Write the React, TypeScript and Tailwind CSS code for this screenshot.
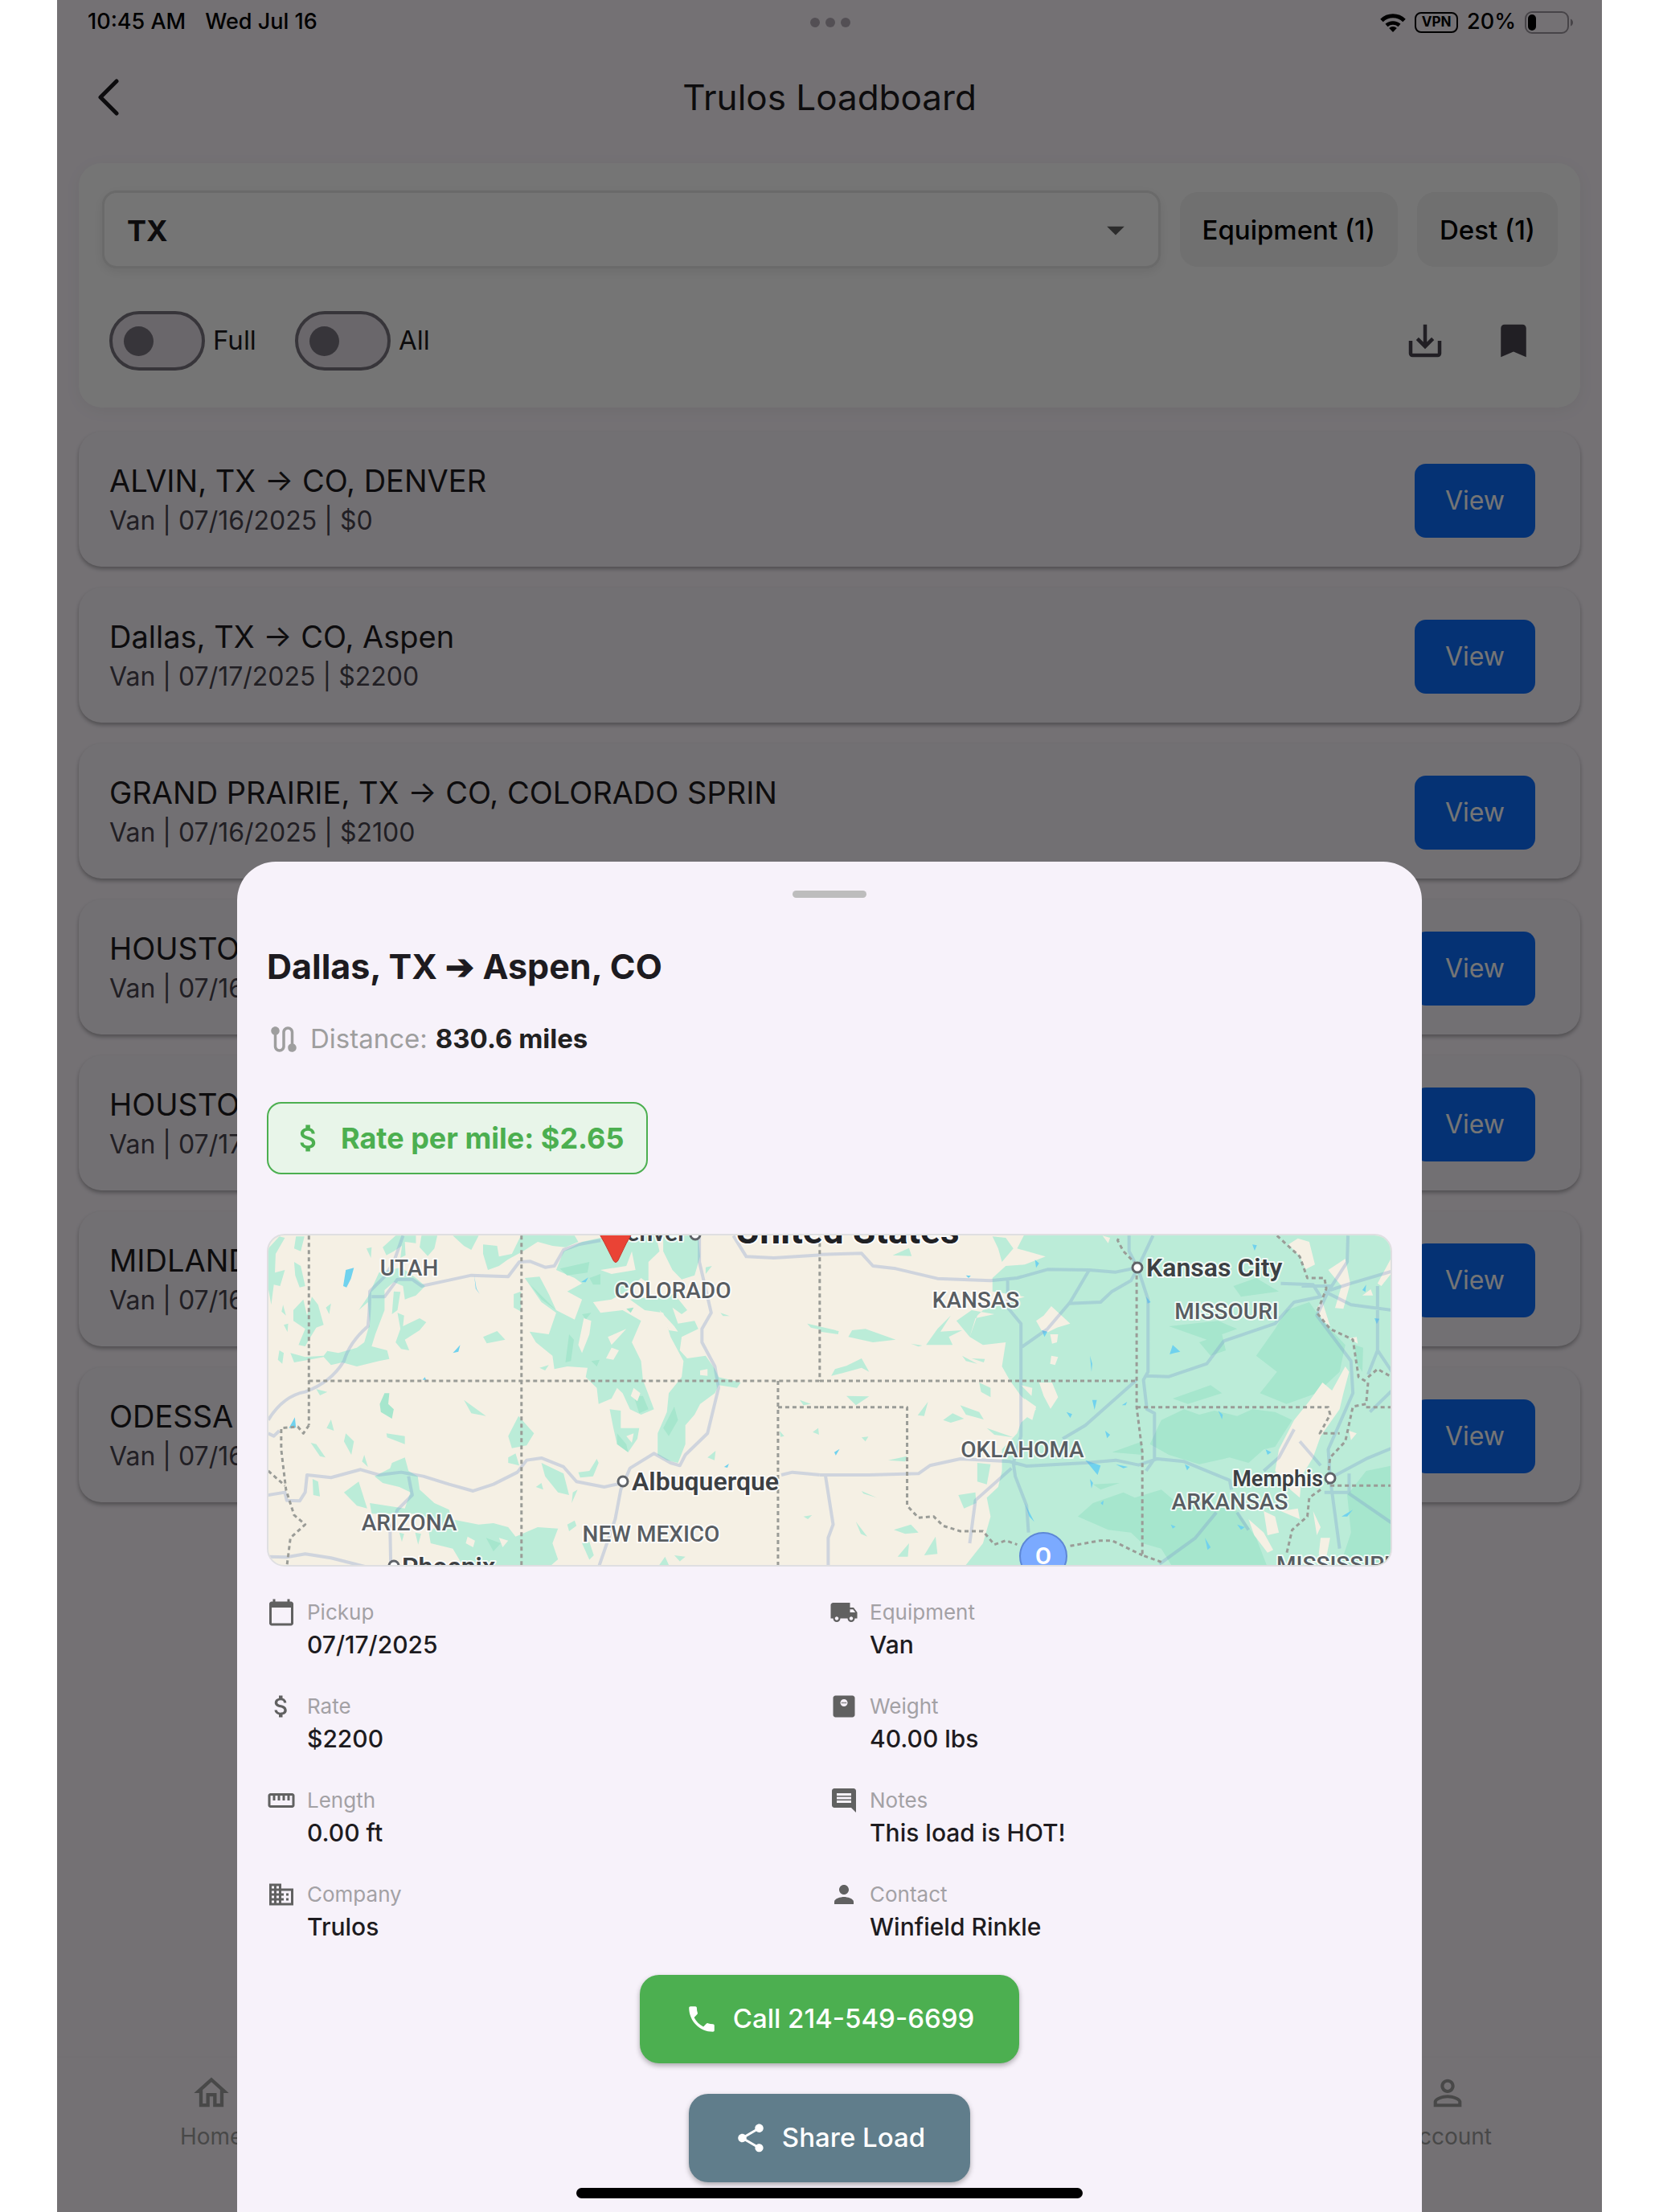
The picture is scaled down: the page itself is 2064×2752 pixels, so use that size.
import React from 'react';
import {
    MdArrowDropDown,
    MdAttachMoney,
    MdBookmark,
    MdBusiness,
    MdCalendarToday,
    MdComment,
    MdLocalShipping,
    MdMonitorWeight,
    MdOutlineHome,
    MdPerson,
    MdPersonOutline,
    MdPhone,
    MdRoute,
    MdSaveAlt,
    MdShare,
    MdStraighten,
} from 'react-icons/md';
import type { IconType } from 'react-icons';

interface Load {
    route: string;
    info: string;
}

interface Detail {
    icon: IconType;
    label: string;
    value: string;
}

const loads: Load[] = [
    { route: 'ALVIN, TX → CO, DENVER', info: 'Van | 07/16/2025 | $0' },
    { route: 'Dallas, TX → CO, Aspen', info: 'Van | 07/17/2025 | $2200' },
    { route: 'GRAND PRAIRIE, TX → CO, COLORADO SPRIN', info: 'Van | 07/16/2025 | $2100' },
    { route: 'HOUSTO', info: 'Van | 07/16' },
    { route: 'HOUSTO', info: 'Van | 07/17' },
    { route: 'MIDLAND', info: 'Van | 07/16' },
    { route: 'ODESSA', info: 'Van | 07/16' },
];

const details: Detail[] = [
    { icon: MdCalendarToday, label: 'Pickup', value: '07/17/2025' },
    { icon: MdLocalShipping, label: 'Equipment', value: 'Van' },
    { icon: MdAttachMoney, label: 'Rate', value: '$2200' },
    { icon: MdMonitorWeight, label: 'Weight', value: '40.00 lbs' },
    { icon: MdStraighten, label: 'Length', value: '0.00 ft' },
    { icon: MdComment, label: 'Notes', value: 'This load is HOT!' },
    { icon: MdBusiness, label: 'Company', value: 'Trulos' },
    { icon: MdPerson, label: 'Contact', value: 'Winfield Rinkle' },
];

const StatusBar: React.FC = () => (
    <div className="grid h-[55px] grid-cols-3 items-center pl-[38px] pr-9 text-[27px] font-medium text-black">
        <div className="flex gap-6">
            <span>10:45 AM</span>
            <span>Wed Jul 16</span>
        </div>
        <div className="flex justify-center gap-[7px]">
            <span className="size-3 rounded-full bg-[#b5adb7]" />
            <span className="size-3 rounded-full bg-[#b5adb7]" />
            <span className="size-3 rounded-full bg-[#b5adb7]" />
        </div>
        <div className="flex items-center justify-end gap-[11px]">
            <svg width="32" height="24" viewBox="0 0 32 24" fill="none" stroke="currentColor" strokeWidth="5">
                <path d="M2 9.5a20 20 0 0 1 28 0" />
                <path d="M8 15.5a12 12 0 0 1 16 0" strokeWidth="4.5" />
                <path d="M16 24l-4.8-5a7 7 0 0 1 9.6 0z" fill="currentColor" stroke="none" />
            </svg>
            <span className="flex h-[26px] w-[54px] items-center justify-center rounded-lg border-2 border-black text-[17px] font-bold">
                VPN
            </span>
            <span>20%</span>
            <svg width="60" height="28" viewBox="0 0 60 28">
                <rect x="1" y="1" width="53" height="26" rx="8" fill="none" stroke="#9b959d" strokeWidth="2" />
                <rect x="4" y="4" width="10" height="20" rx="5" />
                <path d="M57 9.500q3 1.500 3 4.500t-3 4.500z" fill="#9b959d" />
            </svg>
        </div>
    </div>
);

const Header: React.FC = () => (
    <header className="grid h-[132px] grid-cols-[1fr_auto_1fr] items-center px-[50px]">
        <button type="button" aria-label="Back" className="w-fit text-[#1d1b20]">
            <svg width="28" height="46" viewBox="0 0 28 46" fill="none" stroke="currentColor" strokeWidth="5" strokeLinecap="round" strokeLinejoin="round">
                <path d="M24 3L4 23l20 20" />
            </svg>
        </button>
        <h1 className="text-[44px] leading-[56px] text-[#1d1b20]">Trulos Loadboard</h1>
    </header>
);

const Toggle: React.FC<{ label: string }> = ({ label }) => (
    <label className="flex items-center gap-[10px] text-[33px] text-[#1d1b20]">
        <input
            type="checkbox"
            className="flex h-[74px] w-[119px] appearance-none items-center rounded-full border-4 border-[#79747e] bg-[#e6e0e9] pl-[14px] before:size-[37px] before:rounded-full before:bg-[#79747e] before:content-['']"
        />
        {label}
    </label>
);

const Filters: React.FC = () => (
    <section className="mx-[27px] mt-4 rounded-[28px] bg-white pt-[34px] pr-7 pb-[46px] pl-[29px] shadow-[0_4px_20px_rgba(0,0,0,0.05)]">
        <div className="flex items-center gap-6">
            <div className="relative flex-1">
                <select
                    aria-label="State"
                    className="h-[97px] w-full appearance-none rounded-[18px] border-[3px] border-[#e6e6e6] bg-white px-7 pt-[2px] text-4xl font-bold text-[#1d1b20] shadow-[0_4px_14px_rgba(0,0,0,0.08)]"
                >
                    <option>TX</option>
                </select>
                <MdArrowDropDown className="pointer-events-none absolute top-[23px] right-[30px] size-[52px] text-[#616161]" />
            </div>
            <button type="button" className="h-[93px] rounded-[22px] bg-[#f3f3f3] px-7 pt-[2px] text-[33px] font-medium text-black">
                Equipment (1)
            </button>
            <button type="button" className="h-[93px] rounded-[22px] bg-[#f3f3f3] px-7 pt-[2px] text-[33px] font-medium text-black">
                Dest (1)
            </button>
        </div>
        <div className="mt-[53px] flex h-[74px] items-center justify-between pr-7 pl-[9px]">
            <div className="flex gap-12">
                <Toggle label="Full" />
                <Toggle label="All" />
            </div>
            <div className="flex gap-14 text-[#49454f]">
                <button type="button" aria-label="Save search">
                    <MdSaveAlt className="size-[54px]" />
                </button>
                <button type="button" aria-label="Bookmarks">
                    <MdBookmark className="size-[54px]" />
                </button>
            </div>
        </div>
    </section>
);

const LoadCard: React.FC<{ load: Load }> = ({ load }) => (
    <li className="flex h-[168px] items-center justify-between rounded-[28px] bg-[#f8f3fa] pt-[3px] pr-14 pl-[38px] shadow-[0_3px_5px_rgba(0,0,0,0.3)]">
        <div>
            <h2 className="text-[38px] leading-[50px] text-[#1d1b20]">{load.route}</h2>
            <p className="text-[32px] leading-[50px] text-[#49454f]">{load.info}</p>
        </div>
        <button type="button" className="h-[92px] w-[150px] rounded-[14px] bg-[#0d6efd] text-[32px] text-white">
            View
        </button>
    </li>
);

const BottomNav: React.FC = () => (
    <nav className="grid h-[194px] grid-cols-5 border-t-2 border-[#faf3fb] text-[#9e9e9e]">
        <a href="#home" className="flex flex-col items-center gap-[10px] pt-[18px] text-[28px] leading-9">
            <MdOutlineHome className="size-[52px]" />
            Home
        </a>
        <a href="#account" className="col-start-5 flex flex-col items-center gap-[10px] pt-[18px] text-[28px] leading-9">
            <MdPersonOutline className="size-[52px]" />
            Account
        </a>
    </nav>
);

// Western half of the map
const westLand = [
    'M330 190L390 170L430 210L455 240L430 275L400 290L395 240L370 225L345 255L345 330L320 420L310 465L352 480L358 512L330 520L270 540L230 525L200 535L180 505L140 515L100 525L90 490L130 505L180 500L190 482L220 490L270 470L290 450L305 380L300 300L275 330L300 280Z',
    'M370 260L388 262L380 330L365 345Z',
    'M380 340L398 350L395 390L440 360L458 375L440 405L400 440L412 480L390 475L375 450L388 400Z',
    'M612 430L650 408L672 440L622 454Z',
    'M30 100L60 55L75 60L50 120L48 190L75 180L62 240L45 235L38 310L30 250Z',
    'M105 55L128 55L118 110L100 100Z M100 150L118 165L130 240L115 245L103 200Z',
    'M98 330L125 290L135 350L148 280L165 310L180 385L160 395L140 440L130 465L112 460L130 400L98 370Z',
    'M186 320L200 305L195 345Z M296 100L310 95L308 135Z M70 310L78 350L66 335Z M60 480L72 490L68 530L56 515Z M72 385L84 380L82 412Z',
    'M340 95L375 52L430 52L430 80L400 75L402 125L388 135L392 90L370 110L350 125Z',
    'M445 52L488 52L480 100L462 128L440 95Z M530 52L600 52L580 105L560 90Z',
    'M612 85L650 90L655 130L690 120L715 50L860 52L870 75L835 95L800 90L760 75L720 110L680 140L655 165L625 180L612 120Z',
    'M725 210L765 205L790 270L810 330L860 365L880 290L840 260L880 230L860 210L810 180L830 110L880 75L930 60L1080 52L1090 110L1060 150L1060 230L1040 210L1000 260L960 290L910 300L930 340L990 330L1040 370L1015 450L1040 520L1045 590L1075 700L1040 720L1010 700L990 640L975 620L960 660L925 680L920 620L890 580L895 545L840 540L805 550L800 500L755 450L738 410L790 420L810 340L770 300Z',
    'M1100 52L1195 52L1200 130L1185 200L1150 215L1125 180L1100 110Z M1215 170L1232 165L1215 195Z',
    'M1010 290L1130 270L1165 330L1150 345L1125 320L1140 380L1185 370L1195 400L1150 430L1145 480L1165 510L1215 500L1240 550L1250 580L1310 600L1300 620L1250 610L1240 640L1200 680L1185 720L1160 760L1160 830L1140 900L1110 890L1085 870L1085 790L1110 710L1115 640L1150 580L1155 520L1120 430L1100 340L1050 330Z',
    'M955 700L985 705L985 770L1035 770L1030 810L1005 860L975 830L965 770Z',
    'M708 725L750 790L730 835L690 845L680 800Z M680 880L700 865L710 910L680 900Z M695 270L715 260L715 335L695 320Z M765 545L790 535L780 555Z',
    'M350 790L400 800L400 830L352 805Z M240 790L262 820L255 870L235 820Z M188 770L200 738L208 780Z M145 825L160 830L185 880L170 875Z M290 870L300 915L284 895Z M150 960L165 970L170 1025L152 1020Z M235 1010L275 970L298 1070L270 1060Z M160 625L190 635L170 648Z',
    'M318 950L360 920L365 900L400 880L410 930L435 950L440 1000L480 1050L520 1075L525 1110L600 1130L640 1125L680 1140L700 1175L760 1140L815 1145L800 1200L815 1260L790 1290L560 1290L530 1220L470 1200L465 1160L490 1130L440 1090L310 1090L305 1050L400 1070L415 1010L385 990L340 975Z',
    'M770 900L830 940L845 1020L815 1010L780 950Z M870 935L900 930L920 885L925 900L910 950L875 955Z M840 1130L860 1115L865 1135L845 1155Z M880 1200L900 1195L912 1245L900 1262Z M1130 1245L1160 1250L1145 1268Z M1085 1290L1105 1250L1118 1290Z M1220 880L1242 855L1239 890Z M560 665L590 695L620 725L580 715Z M855 1010L868 1000L852 1050Z M755 990L770 975L775 1000Z',
    'M1490 380L1568 405L1568 417L1500 395Z M1470 665L1500 680L1480 685Z M1505 785L1520 770L1522 795Z M1480 1100L1503 1095L1492 1110Z M1255 340L1280 352L1262 352Z M1415 780L1428 800L1418 803Z M385 1160L398 1165L392 1195Z M428 1160L444 1165L436 1205Z',
];

const westForest = [
    'M345 640L358 640L355 680L370 700L365 735L335 710L332 680Z',
    'M900 210L930 195L930 235L910 235Z M880 345L905 340L890 365Z M1000 325L1020 320L1012 340Z M905 520L928 515L920 540Z',
    'M740 235L810 330L770 290Z M820 175L900 150L895 190L840 200Z M1100 770L1130 690L1140 740L1115 800Z M1020 650L1045 650L1060 700L1035 715Z M975 790L1000 830L1005 860L975 830Z M620 1180L660 1200L640 1230Z',
    'M845 420L858 440L850 520L835 525Z',
];

const westClearings = [
    'M885 360L905 370L900 420L880 490L870 460Z M930 180L1000 165L1015 110L1025 180L960 195Z M960 470L980 480L965 515L945 510Z M950 430L1000 400L960 460Z M1090 330L1130 390L1140 410L1115 405Z',
    'M1200 555L1220 550L1220 575L1200 572Z M1020 620L1038 640L1030 670L1012 650Z M1000 800L1020 790L1015 825Z M570 1175L590 1190L585 1215L565 1200Z M655 1180L680 1190L665 1215Z',
];

const westRoads = [
    'M30 740Q70 650 130 635Q200 600 235 520Q250 450 300 390Q305 330 305 260L345 205L370 150L395 52',
    'M310 280L345 280L380 215L420 215L445 240L520 218L580 200L680 205L710 150L740 148L780 170L805 165L830 105L870 85L930 70',
    'M1198 52L1198 150L1230 340L1205 400L1205 450L1240 540L1250 620L1220 790L1160 870L1145 910L1120 900L1075 865L1010 920L985 1000L970 1110L925 1290',
    'M30 1020L75 1010L80 1040L115 1042L130 1010L135 945L200 955L280 925L330 945L390 935L450 950L520 980L585 1005L640 980L705 935L730 890L770 882L830 915L865 970L940 990L990 975',
    'M410 950L420 1020L380 1075L360 1150L362 1290',
    'M30 1250L80 1252L130 1240L200 1255L300 1290',
    'M1290 52L1325 130L1400 135L1524 124',
    'M1420 945L1450 935L1524 945M30 790L45 800L60 780',
];

const westBorders = [
    'M140 52V760', 'M716 52V1290', 'M140 594H1524', 'M1524 52V594', 'M1411 594V1290', 'M1411 692H1524',
    'M140 760L125 790L110 765L65 770L65 850L78 1000L100 1095L130 1130L90 1180L80 1290', 'M30 930L75 985',
];

const westWater = [
    'M240 180L262 172L254 212L242 245L233 240Z M530 490L550 460L545 485Z M588 200L594 250L603 270L592 250Z M86 770L102 730L105 768Z M878 225L897 208L890 226Z M1265 915L1278 903L1274 918Z M448 590L454 580L458 590Z',
];

// Eastern half of the map
const eastLand = [
    'M540 45L520 100L595 130L540 160L490 165L455 210L455 260L540 280L430 330L415 350L395 430L430 460L490 450L480 540L500 590L530 650L570 700L530 750L520 790L480 850L480 930L470 990L440 1030L450 1100L430 1200L380 1290H1520V45Z',
    'M455 55L490 60L510 100L480 150L470 100Z M360 370L400 330L460 345L410 360L395 430Z',
    'M75 430L85 405L120 400L200 440L140 450Z M280 460L310 400L345 350L318 410L375 405L340 430L350 460Z M30 575L40 550L70 538L110 510L130 560L110 545L60 565Z M240 455L270 462L260 466Z',
    'M375 500L415 530L385 520Z M400 510L435 512L432 525Z M70 650L130 652L95 685Z M420 600L450 620L450 655L425 635Z M370 685L420 710L432 738L385 720Z M258 722L285 672L275 725Z M440 770L510 805L460 795Z M325 740L350 715L380 735L345 750Z',
    'M180 890L230 875L225 895Z M195 1150L240 1130L260 1160L225 1165Z M205 1250L235 1200L232 1250Z M95 1120L125 1175L108 1165Z M110 1005L150 1030L115 1015Z M365 1020L410 1010L412 1050L380 1070Z M275 1245L305 1175L310 1240Z M192 125L235 98L242 128Z M0 395L50 408L48 420L0 410Z M110 805L128 802L120 820Z M415 900L450 905L440 980L415 970Z',
];

const eastForest = [
    'M1150 500L1200 400L1230 330L1290 300L1325 370L1385 460L1370 560L1310 640L1230 680L1160 640L1205 560Z',
    'M870 830L900 740L960 700L1000 720L1040 705L1100 725L1140 700L1200 710L1245 740L1200 840L1170 850L1130 900L1080 880L1000 905L920 870Z',
    'M680 1100L720 1050L800 1010L830 1030L900 1000L950 1060L1010 1050L1100 1080L1150 1180L1180 1290H930L900 1220L850 1200L820 1160L760 1150Z',
    'M930 660L1030 610L1060 640L970 680Z M920 390L1050 370L1100 400L1020 440Z M1090 240L1150 210L1210 260L1110 280Z M1000 450L1060 420L1070 480L1030 500Z',
    'M1390 1020L1440 930L1510 910V1290H1370L1400 1160Z',
    'M1410 460L1432 470L1430 560L1415 530Z M720 980L790 975L740 1000Z M770 860L850 820L850 870Z',
];

const eastClearings = [
    'M570 370L590 350L610 315L660 380L625 395L590 420Z M607 420L628 420L625 450L612 455Z M610 500L628 505L620 535L607 530Z M578 600L612 600L628 655L608 698L590 650Z',
    'M540 660L570 690L560 740L535 720Z M530 610L560 620L558 650Z M745 52L765 60L760 80Z',
    'M1325 600L1350 630L1385 540L1395 560L1380 640L1370 700L1320 800L1300 880L1270 950L1265 1030L1240 1000L1200 930L1210 850L1250 740L1290 670Z',
    'M1235 85L1260 62L1290 75L1305 160L1280 178L1265 130Z M1340 180L1385 138L1398 230L1380 325L1358 322L1375 240Z M1310 320L1325 300L1345 390L1325 370Z',
    'M1170 1080L1200 1100L1210 1160L1180 1170Z M1300 1080L1320 1140L1310 1170Z M1130 1110L1170 1160L1195 1225L1180 1235L1145 1170Z M1470 230L1508 130L1508 190L1480 240Z M1430 275L1452 252L1458 275Z M1395 435L1415 430L1418 455Z M1320 1180L1345 1180L1330 1290L1315 1240Z M1395 780L1415 790L1400 815Z M1215 1080L1260 1070L1265 1110Z',
];

const eastRoads = [
    'M0 122L110 118L140 165L200 175L310 212L450 220L520 210L600 178L710 180L780 188L835 172',
    'M710 180L660 300L600 400L530 470V380L495 320V220M655 305L740 300L770 260L820 220L838 172M530 470V800L510 900L515 950L545 1060L550 1160',
    'M838 172L865 290L865 560L853 590L862 700L882 715L882 885L860 930',
    'M860 575L920 578L1020 530L1065 445L1200 380L1250 300L1320 280L1300 235L1215 230',
    'M835 590L700 760L640 810',
    'M0 945L130 945L260 940L290 910L370 885L500 895L545 912L700 900L780 890L840 908L890 885L960 895L1080 965L1085 1000',
    'M15 950L35 1130L22 1180L22 1290M505 920L410 1040L395 1200M815 52V110L838 172L878 52',
    'M1392 52L1390 150L1340 260L1310 350L1400 520L1405 640L1340 850L1345 957L1370 1220',
    'M1345 957L1440 885L1508 845M1330 1010L1390 1010L1508 1125M1345 255L1400 230L1508 185M1330 260L1400 310L1508 330M1470 240V480L1508 560M1470 480L1445 570',
    'M895 1278L990 1180L1045 1085M1100 1085L1130 1150M1170 930L1210 880L1250 775M1265 820L1320 910M1270 240H1350M1395 940V1010M1508 630L1450 710',
];

const eastBorders = [
    'M0 594H835', 'M835 200V692L850 860V1245L900 1270', 'M835 692H1340L1345 720L1318 790H1370',
    'M835 160L800 110L785 70L790 52', 'M0 692H230V1060L260 1105L300 1100L325 1135L370 1155L430 1155L460 1205L490 1190L520 1205',
    'M660 1210L740 1190L770 1190L850 1245', 'M1440 692H1508', 'M1445 580L1470 550L1508 580',
    'M1205 52L1265 130L1285 210L1330 210L1335 250L1310 340L1345 400L1405 440L1420 580L1445 600L1440 680L1405 690L1385 820L1345 880L1340 940V985H1508',
    'M1320 1000L1290 1030L1285 1100L1245 1150L1230 1240',
];

const eastWater = [
    'M922 495L930 460L950 485L935 490Z M1140 85L1152 88L1146 108Z M567 142L578 155L570 172Z M712 500L718 530L716 560Z M718 665L730 665L724 702Z M650 710L665 718L660 732Z M752 780L765 795L757 808Z M700 890L740 910L732 945Z M780 905L812 915L800 920Z M712 960L720 975L716 995Z',
    'M540 1050L565 1120L552 1100Z M1462 360L1475 362L1468 382Z M1375 1100L1405 1075L1390 1100Z M1015 1180L1030 1215L1022 1225Z M860 280L872 300L864 305Z M1100 1130L1120 1140L1110 1150Z M38 860L52 848L42 872Z M385 200L398 202L392 210Z M1430 255L1440 235L1438 262Z M925 1130L938 1138L930 1145Z M796 685L810 672L806 685Z M740 1050L748 1040L746 1058Z M1050 705L1062 720L1060 738Z M1175 850L1190 860L1180 870Z M585 405L600 410L592 430Z M962 905L975 915L968 928Z',
];

interface RegionProps {
    transform: string;
    land: string[];
    forest: string[];
    clearings: string[];
    roads: string[];
    borders: string[];
    water: string[];
}

const MapRegion: React.FC<RegionProps> = ({ transform, land, forest, clearings, roads, borders, water }) => (
    <g transform={transform} strokeLinejoin="round">
        <path d={land.join(' ')} fill="#bbecd8" />
        <path d={forest.join(' ')} fill="#a6e6cd" />
        <path d={clearings.join(' ')} fill="#f5f0e4" />
        <path d={water.join(' ')} fill="#70d2ee" />
        <path d={roads.join(' ')} fill="none" stroke="#7896cd" strokeOpacity="0.3" strokeWidth="4" vectorEffect="non-scaling-stroke" />
        {borders.map(d => (
            <path key={d} d={d} fill="none" stroke="#9a9c97" strokeWidth="3" strokeDasharray="5 4" vectorEffect="non-scaling-stroke" />
        ))}
    </g>
);

const stateLabels = [
    { name: 'UTAH', x: 177, y: 52 },
    { name: 'COLORADO', x: 505, y: 80 },
    { name: 'ARIZONA', x: 177, y: 369 },
    { name: 'NEW MEXICO', x: 478, y: 383 },
    { name: 'KANSAS', x: 882, y: 92 },
    { name: 'MISSOURI', x: 1194, y: 106 },
    { name: 'OKLAHOMA', x: 940, y: 278 },
    { name: 'ARKANSAS', x: 1198, y: 343 },
    { name: 'MISSISSIPPI', x: 1336, y: 421 },
];

const cityDots = [
    { x: 443, y: 308 },
    { x: 158, y: 413 },
    { x: 533, y: 1 },
    { x: 1083, y: 42 },
    { x: 1323, y: 304 },
];

const RouteMap: React.FC = () => (
    <div className="mt-[74px] h-[414px] overflow-hidden rounded-[22px] border-2 border-[#dfdfe1] bg-[#f5f0e4]">
        <svg
            className="h-full w-full font-['Roboto','Liberation_Sans',sans-serif]"
            viewBox="2 2 1396 410"
            preserveAspectRatio="xMidYMid slice"
            role="img"
            aria-label="Route map"
        >
            <MapRegion
                transform="translate(688 -15) scale(0.472 0.3333)"
                land={eastLand}
                forest={eastForest}
                clearings={eastClearings}
                roads={eastRoads}
                borders={eastBorders}
                water={eastWater}
            />
            <MapRegion
                transform="translate(-12 -15) scale(0.4592 0.3333)"
                land={westLand}
                forest={westForest}
                clearings={westClearings}
                roads={westRoads}
                borders={westBorders}
                water={westWater}
            />
            <g stroke="#ffffff" strokeOpacity="0.8" strokeWidth="4" strokeLinejoin="round" paintOrder="stroke">
                <g fill="#585d62" fontSize="28" fontWeight="500" textAnchor="middle">
                    {stateLabels.map(l => (
                        <text key={l.name} x={l.x} y={l.y}>{l.name}</text>
                    ))}
                </g>
                <g fill="#3c4043" fontWeight="600">
                    <text x="454" y="319" fontSize="32">Albuquerque</text>
                    <text x="168" y="425" fontSize="32">Phoenix</text>
                    <text x="522" y="9" fontSize="30" textAnchor="end">Denver</text>
                    <text x="1094" y="53" fontSize="32">Kansas City</text>
                    <text x="1314" y="314" fontSize="27" textAnchor="end">Memphis</text>
                </g>
                <text x="583" y="12" fontSize="46" fontWeight="700" fill="#202124">United States</text>
            </g>
            <g fill="#ffffff" stroke="#5f6368" strokeWidth="3">
                {cityDots.map(c => (
                    <circle key={c.x} cx={c.x} cy={c.y} r="6" />
                ))}
            </g>
            <path d="M408 -10Q420 10 431 33Q434 38 437 33Q446 12 460 -10Z" fill="#ea4335" stroke="#c5372c" strokeWidth="1" />
            <circle cx="966" cy="401" r="29" fill="#7baaff" stroke="#5d87d6" strokeWidth="2" />
            <text x="966" y="411" fontSize="29" fontWeight="600" fill="#ffffff" textAnchor="middle">O</text>
        </svg>
    </div>
);

const LoadSheet: React.FC = () => (
    <section role="dialog" aria-label="Load details" className="w-full max-w-[1474px] rounded-t-[48px] bg-[#f7f2fa] px-[37px] pt-9 pb-[37px]">
        <div className="mx-auto h-[9px] w-[92px] rounded-full bg-[#bdbdbd]" />
        <h2 className="mt-[60px] text-[43px] leading-[50px] font-bold text-[#1d1b20]">Dallas, TX ➔ Aspen, CO</h2>
        <p className="mt-[46px] flex h-10 items-center text-[33px]">
            <MdRoute className="size-[42px] text-[#9e9e9e]" />
            <span className="ml-3 text-[#9e9e9e]">Distance:</span>
            <span className="ml-[10px] font-bold text-[#212121]">830.6 miles</span>
        </p>
        <div className="mt-[58px] flex h-[90px] w-fit items-center gap-[18px] rounded-[18px] border-2 border-[#4caf50] bg-[#e8f5e9] px-7 text-[36px] font-bold text-[#4caf50]">
            <MdAttachMoney className="size-[44px]" />
            Rate per mile: $2.65
        </div>
        <RouteMap />
        <dl className="mt-[39px] grid grid-cols-2 gap-y-[37px]">
            {details.map(({ icon: Icon, label, value }) => (
                <div key={label} className="flex gap-[14px]">
                    <Icon className="size-9 text-[#616161]" />
                    <div>
                        <dt className="text-[26px] leading-9 text-[#a3a1a5]">{label}</dt>
                        <dd className="text-[30px] leading-[44px] font-medium text-[#1d1b20]">{value}</dd>
                    </div>
                </div>
            ))}
        </dl>
        <div className="mt-[38px] flex flex-col items-center gap-[38px] text-[33px] font-medium text-white">
            <a
                href="tel:214-549-6699"
                className="flex h-[110px] items-center gap-[18px] rounded-3xl bg-[#4caf50] px-14 shadow-[0_3px_6px_rgba(0,0,0,0.3)]"
            >
                <MdPhone className="size-[42px]" />
                Call 214-549-6699
            </a>
            <button type="button" className="flex h-[110px] items-center gap-[18px] rounded-3xl bg-[#607d8b] px-14 shadow-[0_3px_6px_rgba(0,0,0,0.3)]">
                <MdShare className="size-[42px]" />
                Share Load
            </button>
        </div>
    </section>
);

const App: React.FC = () => {
    return (
        <div className="min-h-screen bg-white px-[71px] font-['Inter','Noto_Sans',sans-serif]">
            <div className="relative flex min-h-screen flex-col overflow-hidden bg-[#fcf6fd]">
                <StatusBar />
                <Header />
                <main className="flex-1">
                    <Filters />
                    <ul className="mx-[27px] mt-[30px] flex flex-col gap-[26px]">
                        {loads.map((load, i) => (
                            <LoadCard key={i} load={load} />
                        ))}
                    </ul>
                </main>
                <BottomNav />

                {/* Scrim with the open sheet on top of the board */}
                <div className="absolute inset-0 flex items-end justify-center bg-black/54">
                    <LoadSheet />
                </div>
                <div className="absolute bottom-[17px] left-1/2 h-[13px] w-[630px] -translate-x-1/2 rounded-full bg-black" />
            </div>
        </div>
    );
};

export default App;
